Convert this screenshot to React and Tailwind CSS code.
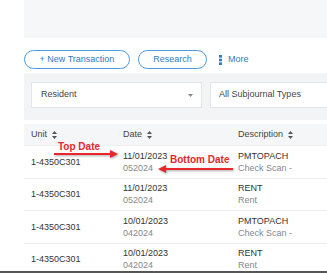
import React from 'react';

const rows = [
  { unit: '1-4350C301', date: '11/01/2023', period: '052024', code: 'PMTOPACH', desc: 'Check Scan -' },
  { unit: '1-4350C301', date: '11/01/2023', period: '052024', code: 'RENT', desc: 'Rent' },
  { unit: '1-4350C301', date: '10/01/2023', period: '042024', code: 'PMTOPACH', desc: 'Check Scan -' },
  { unit: '1-4350C301', date: '10/01/2023', period: '042024', code: 'RENT', desc: 'Rent' },
];

function SortIcon() {
  return (
    <svg width="5" height="8" viewBox="0 0 5 8" className="ml-[5px] inline-block">
      <path d="M2.5 0 L5 3 L0 3 Z" fill="#555" />
      <path d="M2.5 8 L5 5 L0 5 Z" fill="#555" />
    </svg>
  );
}

function Arrow({ x1, x2, y }) {
  const dir = x2 > x1 ? 1 : -1;
  const base = x2 - dir * 8;
  return (
    <g>
      <line x1={x1} y1={y} x2={base} y2={y} stroke="#e8262b" strokeWidth="1.8" />
      <path d={`M${x2} ${y} L${base} ${y - 4} L${base} ${y + 4} Z`} fill="#e8262b" />
    </g>
  );
}

export default function App() {
  return (
    <div className="relative h-[275px] w-[327px] overflow-hidden bg-white font-['Liberation_Sans',Arial,sans-serif] text-[9px] text-[#333]">
      <div className="pl-[24px]">
        <div className="h-[38px] bg-[#f6f7f9]" />

        <div className="mt-[12px] flex h-[19px] items-center">
          <button className="flex h-[19px] w-[106px] items-center justify-center rounded-full border border-[#4a9de0] text-[9px] text-[#2b7dc4]">
            + New Transaction
          </button>
          <button className="ml-[8px] flex h-[19px] w-[69px] items-center justify-center rounded-full border border-[#4a9de0] text-[9px] text-[#2b7dc4]">
            Research
          </button>
          <div className="ml-[12px] flex items-center text-[#2b7dc4]">
            <svg width="3" height="10" viewBox="0 0 3 10">
              <rect x="0" y="0" width="3" height="2.6" fill="#2b7dc4" />
              <rect x="0" y="3.7" width="3" height="2.6" fill="#2b7dc4" />
              <rect x="0" y="7.4" width="3" height="2.6" fill="#2b7dc4" />
            </svg>
            <span className="ml-[6px]">More</span>
          </div>
        </div>

        <div className="mt-[4px] flex h-[47px] gap-[8px] bg-[#f3f4f6] pl-[7px] pt-[9px]">
          <div className="flex h-[26px] w-[171px] items-center justify-between border border-[#e4e5e7] bg-white pl-[9px] pr-[8px] text-[#444]">
            <span>Resident</span>
            <svg width="5" height="3" viewBox="0 0 5 3">
              <path d="M0 0 L5 0 L2.5 3 Z" fill="#888" />
            </svg>
          </div>
          <div className="flex h-[26px] flex-1 items-center border border-r-0 border-[#e4e5e7] bg-white pl-[8px] text-[#444]">
            All Subjournal Types
          </div>
        </div>

        <div className="mt-[4px] flex h-[22px] items-center border-b border-[#eceef0] bg-[#f5f6f7] pl-[7px] text-[#444]">
          <div className="flex w-[92px] items-center">Unit<SortIcon /></div>
          <div className="flex w-[115px] items-center">Date<SortIcon /></div>
          <div className="flex items-center">Description<SortIcon /></div>
        </div>

        {rows.map((r, i) => (
          <div key={i} className="flex h-[32.5px] items-center border-b border-[#eceef0] pl-[7px] leading-[12px]">
            <div className="w-[92px] text-[#333]">{r.unit}</div>
            <div className="w-[115px]">
              <div className="text-[#333]">{r.date}</div>
              <div className="text-[#888]">{r.period}</div>
            </div>
            <div>
              <div className="text-[#333]">{r.code}</div>
              <div className="text-[#888]">{r.desc}</div>
            </div>
          </div>
        ))}
      </div>

      <div className="absolute left-0 top-[271px] h-[2px] w-full bg-[#555]" />

      <span className="absolute left-[58px] top-[141px] text-[10px] font-bold leading-[12px] text-[#e8262b]">Top Date</span>
      <span className="absolute left-[170px] top-[154px] text-[10px] font-bold leading-[12px] text-[#e8262b]">Bottom Date</span>
      <svg className="absolute left-0 top-0 drop-shadow-[1px_1px_1px_rgba(0,0,0,0.35)]" width="327" height="275">
        <Arrow x1={54} x2={118} y={154} />
        <Arrow x1={233} x2={158} y={169} />
      </svg>
    </div>
  );
}
